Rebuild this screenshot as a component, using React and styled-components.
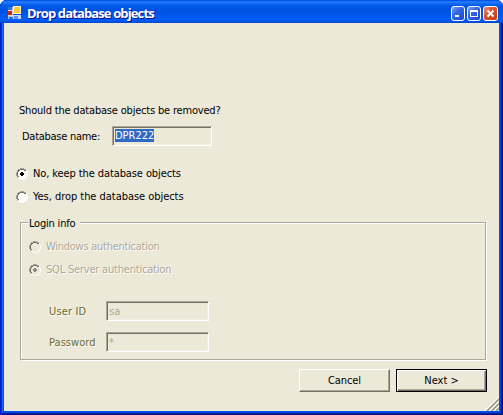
import React from "react";
import styled, { createGlobalStyle, css } from "styled-components";

const Global = createGlobalStyle`
  * { box-sizing: border-box; }
  body { margin: 0; background: #fff; }
`;

const Window = styled.div`
  width: 503px;
  height: 415px;
  display: flex;
  flex-direction: column;
  padding: 0 4px 4px;
  border-radius: 7px 7px 0 0;
  overflow: hidden;
  background: #0054e3;
  box-shadow: inset 1px 0 #0019cf, inset 2px 0 #0831d9, inset -1px 0 #00138c,
    inset -2px 0 #001ea0, inset 0 -1px #00138c, inset 0 -2px #001ea0,
    inset 3px 0 #166aee, inset -3px 0 #0441d8, inset 0 -3px #0441d8;
  font: 11px/14px "DejaVu Sans Condensed", "DejaVu Sans", sans-serif;
  font-stretch: condensed;
  color: #000;
`;

const TitleBar = styled.header`
  height: 23px;
  margin: 0 -4px;
  padding: 3px 5px 0 8px;
  display: flex;
  align-items: center;
  gap: 2px;
  background: linear-gradient(#0048d8 0, #0a62f4 1px, #2a80fa 2px, #0a66f2 4px, #0058e8 6px, #0052e0 10px, #0054e6 14px, #005cf4 18px, #005cf4 20px, #0050dc 22px, #0046d0 23px);
`;

const Title = styled.h1`
  flex: 1;
  margin: 0 0 0 3px;
  font: bold 13px/16px "Open Sans", sans-serif;
  letter-spacing: -0.87px;
  color: #fff;
  text-shadow: 1px 1px #0f1089;
  white-space: nowrap;
`;

const Caption = styled.button`
  width: ${(p) => (p.$close ? 15 : 14)}px;
  height: 15px;
  padding: 0;
  border: 1px solid #fff;
  border-radius: 3px;
  display: flex;
  background: ${(p) => (p.$close ? "linear-gradient(135deg, #e9967c, #df5230 40%, #c33c12)" : "linear-gradient(135deg, #7fa2f5, #3268e4 40%, #1b48d2)")};
`;

const Body = styled.main`
  flex: 1;
  display: flex;
  flex-direction: column;
  padding: 81px 12px 0;
  background: #ece9d8;
  position: relative;
`;

const Text = styled.span`
  white-space: nowrap;
  letter-spacing: ${(p) => p.$track || 0}px;
  ${(p) => p.$tone === "disabled" && css`color: #aca899; text-shadow: 1px 1px #fff;`}
  ${(p) => p.$tone === "olive" && css`color: #6a6a35; text-shadow: 1px 1px #fbfaf2;`}
`;

const Prompt = styled.p`
  margin: 0 0 0 3px;
  height: 14px;
`;

const FieldRow = styled.div`
  display: grid;
  grid-template-columns: ${(p) => p.$label}px ${(p) => p.$field}px;
  height: 20px;
  line-height: 21px;
  margin: ${(p) => p.$margin};
`;

const Field = styled.div`
  height: 20px;
  padding: 1px 0 0 2px;
  border: 1px solid;
  border-color: #aca899 #fff #fff #aca899;
  box-shadow: inset 1px 1px #716f64, inset -1px -1px #f1efe2;
  line-height: 17px;
  color: #aca899;
`;

const Selection = styled.span`
  display: block;
  width: 39px;
  height: 13px;
  margin: 1px 0 0;
  line-height: 14px;
  background: #316ac5;
  color: #fff;
`;

const Choices = styled.div`
  margin-top: 16px;
`;

const Option = styled.label`
  display: flex;
  align-items: center;
  gap: 5px;
  height: 23px;
`;

const GroupBox = styled.section`
  position: relative;
  width: 466px;
  height: 138px;
  margin: 14px 0 0 4px;
  padding: 12px 8px 0;
  border: 1px solid #aca899;
  box-shadow: 1px 1px #fff, inset 1px 1px #fff;
`;

const Legend = styled.h2`
  position: absolute;
  left: 7px;
  top: -6px;
  width: 52px;
  margin: 0;
  padding-left: 1px;
  font: inherit;
  background: #ece9d8;
`;

const Actions = styled.footer`
  display: flex;
  justify-content: flex-end;
  gap: 6px;
  margin-top: 9px;
`;

const Button = styled.button`
  width: 91px;
  height: 23px;
  padding: 0;
  font: inherit;
  color: #000;
  background: #ece9d8;
  border: 1px solid;
  border-color: ${(p) => (p.$primary ? "#000" : "#fff #716f64 #716f64 #fff")};
  box-shadow: ${(p) => (p.$primary ? "inset 1px 1px #fff, inset -1px -1px #716f64, inset -2px -2px #aca899" : "inset -1px -1px #aca899")};
`;

const Grip = styled.svg`
  position: absolute;
  right: 0;
  bottom: 0;
`;

function Radio({ checked, disabled }) {
  return (
    <svg width="12" height="12" shapeRendering="crispEdges">
      <path d="M4 1h4v1h2v2h1v4h-1v2h-2v1h-4v-1h-2v-2h-1v-4h1v-2h2z" fill={disabled ? "#ece9d8" : "#fff"} />
      <path d="M4 .5h4M2 1.5h2M8 1.5h2M1.5 2v2M.5 4v4M1.5 8v2" stroke="#aca899" />
      <path d="M4 1.5h4M2 2.5h2M8 2.5h2M2.5 3v1M1.5 4v4M2.5 8v1" stroke="#716f64" />
      <path d="M10.5 2v2M11.5 4v4M10.5 8v2M8 10.5h2M4 11.5h4M2 10.5h2" stroke="#fff" />
      {checked && <path d="M5 4h2v1h1v2h-1v1h-2v-1h-1v-2h1z" fill={disabled ? "#8f8c7e" : "#000"} />}
    </svg>
  );
}

function AppIcon() {
  return (
    <svg width="14" height="14" shapeRendering="crispEdges">
      <path d="M0 1h5v12H0z" fill="#a9c6f6" />
      <path d="M0 1h4v3H0zM1 11h4v2H1z" fill="#2f6fdf" />
      <path d="M0 4h5v6H0z" fill="#f0d8d0" />
      <path d="M0 5h4v4H0z" fill="#c8280e" />
      <path d="M5 0h8v8H5z" fill="#fff2bd" />
      <path d="M6 1h6v6H6z" fill="#fcc93a" />
      <path d="M5 9h8v4H5z" fill="#c5daf9" />
      <path d="M6 10h4v3H6z" fill="#5c90ea" />
    </svg>
  );
}

export default function App() {
  return (
    <>
      <Global />
      <Window>
        <TitleBar>
          <AppIcon />
          <Title>Drop database objects</Title>
          <Caption aria-label="Minimize">
            <svg width="12" height="13"><path d="M3 8h4v2H3z" fill="#fff" /></svg>
          </Caption>
          <Caption aria-label="Maximize">
            <svg width="12" height="13" shapeRendering="crispEdges"><path d="M2 3h8v7H2zM3 5v4h6V5z" fill="#fff" fillRule="evenodd" /></svg>
          </Caption>
          <Caption $close aria-label="Close">
            <svg width="13" height="13"><path d="M3.5 3.5l6 6M9.5 3.5l-6 6" stroke="#fff" strokeWidth="2" /></svg>
          </Caption>
        </TitleBar>
        <Body>
          <Prompt><Text $track={-0.19}>Should the database objects be removed?</Text></Prompt>
          <FieldRow $label={90} $field={100} $margin="8px 0 0 6px">
            <Text $track={-0.27}>Database name:</Text>
            <Field><Selection><Text>DPR222</Text></Selection></Field>
          </FieldRow>
          <Choices>
            <Option><Radio checked /><Text $track={-0.1}>No, keep the database objects</Text></Option>
            <Option><Radio /><Text $track={-0.04}>Yes, drop the database objects</Text></Option>
          </Choices>
          <GroupBox>
            <Legend><Text $track={-0.2}>Login info</Text></Legend>
            <Option><Radio disabled /><Text $tone="disabled" $track={-0.26}>Windows authentication</Text></Option>
            <Option><Radio checked disabled /><Text $tone="disabled" $track={-0.2}>SQL Server authentication</Text></Option>
            <FieldRow $label={57} $field={103} $margin="20px 0 0 20px">
              <Text $tone="olive" $track={0.15}>User ID</Text><Field><Text>sa</Text></Field>
            </FieldRow>
            <FieldRow $label={57} $field={103} $margin="11px 0 0 20px">
              <Text $tone="olive" $track={0.05}>Password</Text><Field><Text>*</Text></Field>
            </FieldRow>
          </GroupBox>
          <Actions>
            <Button><Text $track={-0.1}>Cancel</Text></Button>
            <Button $primary><Text>Next &gt;</Text></Button>
          </Actions>
          <Grip width="14" height="14">
            <path d="M0 14L14 0M4.5 14L14 4.5M9 14L14 9" stroke="#fff" strokeWidth="1.2" />
            <path d="M1.5 14.5L14.5 1.5M6 14.5L14.5 6M10.5 14.5L14.5 10.5" stroke="#98948a" strokeWidth="1.6" />
          </Grip>
        </Body>
      </Window>
    </>
  );
}
